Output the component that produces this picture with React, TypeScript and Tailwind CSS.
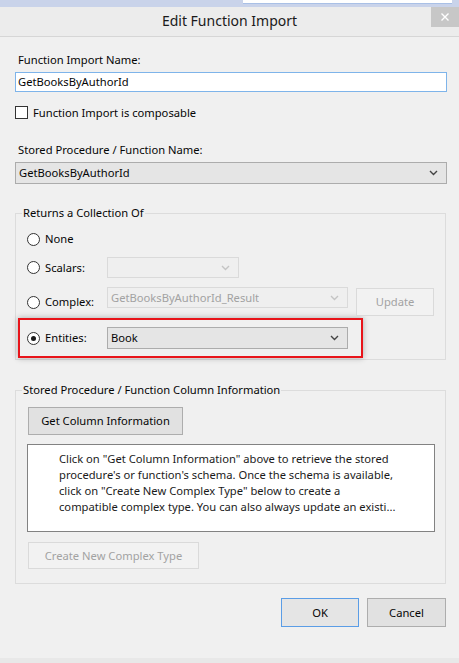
import { FC, ReactNode } from 'react'

const font = { fontFamily: '"Segoe UI", "Noto Sans", sans-serif' }

const Chevron: FC<{ disabled?: boolean }> = ({ disabled }) => (
    <svg width="9" height="6" viewBox="0 0 9 6" className="shrink-0">
        <path
            d="M1 1 L4.5 4.5 L8 1"
            fill="none"
            stroke={disabled ? '#c4c4c4' : '#444444'}
            strokeWidth="1.4"
        />
    </svg>
)

const Radio: FC<{ checked?: boolean }> = ({ checked }) => (
    <span className="w-[13px] h-[13px] rounded-full border border-[#333333] bg-white flex items-center justify-center shrink-0">
        {checked && <span className="w-[5px] h-[5px] rounded-full bg-[#1a1a1a]" />}
    </span>
)

interface DropdownProps {
    value?: string
    disabled?: boolean
    className?: string
}

const Dropdown: FC<DropdownProps> = ({ value, disabled, className }) => (
    <div
        className={
            'flex items-center justify-between pl-[3px] pr-[8px] border ' +
            (disabled
                ? 'border-[#dadada] bg-[#efefef] text-[#a2a2a2] '
                : 'border-[#acacac] bg-[#e5e5e5] text-[#050505] ') +
            (className ?? '')
        }
    >
        <span className="truncate">{value}</span>
        <Chevron disabled={disabled} />
    </div>
)

const Button: FC<{ children: ReactNode; className?: string; disabled?: boolean; primary?: boolean }> = ({
    children,
    className,
    disabled,
    primary,
}) => (
    <div
        className={
            'flex items-center justify-center border ' +
            (disabled
                ? 'border-[#dadada] bg-[#f2f2f2] text-[#a2a2a2] '
                : primary
                ? 'border-[#5b9de6] bg-[#e5e5e5] text-[#050505] '
                : 'border-[#adadad] bg-[#e1e1e1] text-[#050505] ') +
            (className ?? '')
        }
    >
        {children}
    </div>
)

const RadioLabel: FC<{ label: string; checked?: boolean }> = ({ label, checked }) => (
    <div className="flex items-center h-[16px] shrink-0">
        <Radio checked={checked} />
        <span className="ml-[5px] w-[62px]">{label}</span>
    </div>
)

const App: FC = () => {
    return (
        <div className="w-[459px] h-[663px] flex flex-col bg-[#f0f0f0] text-[11.2px] leading-[16px] text-[#050505] overflow-hidden" style={font}>
            {/* strip of the window behind */}
            <div className="h-[7px] bg-[#c9d3ea] flex shrink-0">
                <div className="ml-[243px] w-[209px] h-[4px] bg-white border-b border-[#a9c0e6]" />
            </div>

            {/* title bar */}
            <div className="h-[30px] shrink-0 bg-[#ececec] border-b border-[#d6d6d6] flex justify-between">
                <div className="flex-1 flex items-center justify-center text-[14px] text-[#1a1a1a] pl-[28px] pb-[1px]">
                    Edit Function Import
                </div>
                <div className="w-[28px] h-[20px] bg-[#c7c7c7] flex items-center justify-center text-white">
                    <svg width="8" height="8" viewBox="0 0 8 8">
                        <path d="M0.5 0.5 L7.5 7.5 M7.5 0.5 L0.5 7.5" stroke="white" strokeWidth="1.4" />
                    </svg>
                </div>
            </div>

            {/* body */}
            <div className="flex-1 flex flex-col pl-[15px] pr-[13px]">
                <div className="mt-[15px] pl-[3px]">Function Import Name:</div>
                <div className="mt-[4px] h-[20px] w-[432px] border border-[#7eb4ea] bg-white flex items-center pl-[2px]">
                    GetBooksByAuthorId
                </div>

                <div className="mt-[14px] h-[13px] flex items-center">
                    <span className="w-[13px] h-[13px] border border-[#333333] bg-white shrink-0" />
                    <span className="ml-[5px]">Function Import is composable</span>
                </div>

                <div className="mt-[23px] pl-[3px]">Stored Procedure / Function Name:</div>
                <Dropdown value="GetBooksByAuthorId" className="mt-[4px] h-[22px] w-[432px]" />

                {/* returns group */}
                <fieldset className="mt-[21px] w-[431px] border border-[#dcdcdc] pl-[11px] pr-[11px] pb-[1px]">
                    <legend className="-ml-[5px] px-[1px] leading-[16px]">Returns a Collection Of</legend>

                    <div className="mt-[10px] flex">
                        <RadioLabel label="None" />
                    </div>

                    <div className="mt-[10px] h-[21px] flex items-center">
                        <RadioLabel label="Scalars:" />
                        <Dropdown disabled className="h-[21px] w-[132px]" />
                    </div>

                    <div className="mt-[9px] flex items-start">
                        <div className="mt-[7px]">
                            <RadioLabel label="Complex:" />
                        </div>
                        <Dropdown disabled value="GetBooksByAuthorId_Result" className="h-[21px] w-[241px]" />
                        <Button disabled className="ml-[8px] mt-[1px] h-[28px] w-[78px]">
                            Update
                        </Button>
                    </div>

                    <div className="mt-[2px] -ml-[9px] w-[345px] h-[40px] border-2 border-[#e8141a] shadow-[0_0_6px_rgba(0,0,0,0.3)] flex items-center pl-[7px]">
                        <RadioLabel label="Entities:" checked />
                        <Dropdown value="Book" className="h-[22px] w-[241px]" />
                    </div>
                </fieldset>

                {/* column information group */}
                <fieldset className="mt-[22px] w-[431px] border border-[#dcdcdc] pl-[12px] pb-[14px]">
                    <legend className="-ml-[6px] px-[1px] leading-[16px]">Stored Procedure / Function Column Information</legend>

                    <Button className="mt-[9px] h-[28px] w-[155px]">Get Column Information</Button>

                    <div className="mt-[9px] -ml-[1px] w-[408px] h-[88px] border border-[#828282] bg-white pl-[31px] pt-[6px] text-[#1a1a1a]">
                        <div>Click on "Get Column Information" above to retrieve the stored</div>
                        <div>procedure's or function's schema. Once the schema is available,</div>
                        <div>click on "Create New Complex Type" below to create a</div>
                        <div>compatible complex type. You can also always update an existi...</div>
                    </div>

                    <Button disabled className="mt-[10px] h-[27px] w-[171px]">
                        Create New Complex Type
                    </Button>
                </fieldset>

                <div className="mt-[14px] flex justify-end gap-[8px] pr-[0px]">
                    <Button primary className="h-[29px] w-[78px]">
                        OK
                    </Button>
                    <Button className="h-[29px] w-[79px]">Cancel</Button>
                </div>
            </div>

            <div className="h-[5px] shrink-0 bg-[#e8e8e8]" />
        </div>
    )
}

export default App
